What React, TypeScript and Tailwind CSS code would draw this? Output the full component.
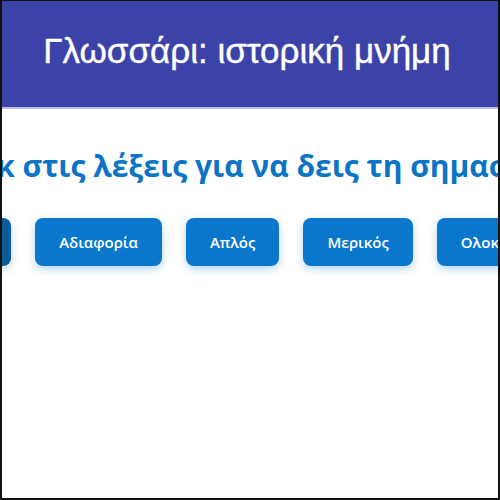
const words = ["Μνημείο", "Αδιαφορία", "Απλός", "Μερικός", "Ολοκληρωτικός"];

export default function App() {
  return (
    <div className="w-[500px] h-[500px] overflow-hidden bg-white border-x-2 border-b-2 border-t border-[#111] font-['Liberation_Sans',Arial,sans-serif]">
      <header className="h-[106px] bg-[#3b43a8] flex items-center justify-center shadow-[0_2px_0_#b9bde6]">
        <h1 className="text-[35px] text-white leading-none -mt-2 -ml-[6px] whitespace-nowrap [-webkit-text-stroke:0.4px_white]">
          Γλωσσάρι: ιστορική μνήμη
        </h1>
      </header>

      <main className="pt-[44px]">
        <div className="flex justify-center pr-[18px]">
          <h2 className="text-[30px] font-bold text-[#0b74c6] whitespace-nowrap leading-none font-['Open_Sans',sans-serif]">
            Κάνε κλικ στις λέξεις για να δεις τη σημασία τους
          </h2>
        </div>

        <div className="flex justify-center gap-6 mt-[37px]">
          {words.map((w, i) => (
            <button
              key={w}
              className={`shrink-0 h-12 px-6 rounded-lg text-white text-[15px] font-semibold font-['Open_Sans',sans-serif] shadow-[0_3px_8px_rgba(11,116,198,0.3)] ${
                i === 0 ? "bg-[#0a5b9c]" : "bg-[#0a77cc]"
              }`}
            >
              {w}
            </button>
          ))}
        </div>
      </main>
    </div>
  );
}
